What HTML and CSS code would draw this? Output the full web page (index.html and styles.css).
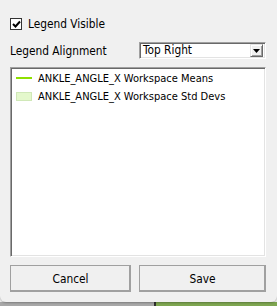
FILE: index.html
```html
<!DOCTYPE html>
<html lang="en">
<head>
    <meta charset="UTF-8">
    <title>Legend Settings</title>
    <link rel="stylesheet" href="styles.css">
</head>
<body>
    <div class="dialog">
        <label class="check-row">
            <span class="checkbox">
                <svg width="9" height="9" viewBox="0 0 9 9"><path d="M1 4 L3.5 6.5 L8 1.5" fill="none" stroke="#000" stroke-width="2"/></svg>
            </span>
            <span>Legend Visible</span>
        </label>

        <div class="align-row">
            <span class="label">Legend Alignment</span>
            <div class="select">
                <span class="select-text">Top Right</span>
                <span class="select-btn">
                    <svg width="7" height="4" viewBox="0 0 7 4"><path d="M0 0 H7 L3.5 4 Z" fill="#000"/></svg>
                </span>
            </div>
        </div>

        <div class="listbox">
            <div class="item">
                <span class="swatch-line"></span>
                <span class="item-text">ANKLE_ANGLE_X Workspace Means</span>
            </div>
            <div class="item">
                <span class="swatch-box"></span>
                <span class="item-text">ANKLE_ANGLE_X Workspace Std Devs</span>
            </div>
        </div>

        <div class="buttons">
            <button class="btn btn-cancel">Cancel</button>
            <button class="btn btn-save">Save</button>
        </div>
    </div>
    <div class="taskbar">
        <div class="tb-left"></div>
        <div class="tb-right"></div>
    </div>
</body>
</html>
```

FILE: styles.css
```css
* {
    margin: 0;
    padding: 0;
    box-sizing: border-box;
}

body {
    width: 277px;
    height: 306px;
    overflow: hidden;
    font-family: "DejaVu Sans Condensed", "DejaVu Sans", sans-serif;
    font-stretch: condensed;
    font-size: 11.8px;
    color: #000;
    background: #f0f0f0;
}

.dialog {
    height: 302px;
    background: #f0f0f0;
    border-radius: 0 0 6px 6px;
    box-shadow: 0 1px 2px rgba(0, 0, 0, 0.25);
    padding: 17px 11px 0 10px;
    display: flex;
    flex-direction: column;
    position: relative;
    z-index: 1;
}

.check-row {
    display: flex;
    align-items: center;
    gap: 6px;
    height: 12px;
    margin-top: 1px;
}

.checkbox {
    width: 12px;
    height: 12px;
    border: 1px solid #333;
    background: #fff;
    display: flex;
    align-items: center;
    justify-content: center;
}

.align-row {
    display: flex;
    align-items: center;
    margin-top: 12px;
    height: 17px;
}

.label {
    width: 129px;
}

.select {
    width: 127px;
    height: 17px;
    background: #fff;
    border-top: 1px solid #a0a0a0;
    border-left: 1px solid #a0a0a0;
    border-right: 1px solid #fff;
    border-bottom: 1px solid #fff;
    box-shadow: inset 1px 1px 0 #696969, inset -1px -1px 0 #e3e3e3;
    display: flex;
    align-items: center;
    padding: 0 2px 0 3px;
}

.select-text {
    flex: 1;
    line-height: 13px;
}

.select-btn {
    width: 13px;
    height: 13px;
    background: #f0f0f0;
    border-top: 1px solid #e3e3e3;
    border-left: 1px solid #e3e3e3;
    border-right: 1px solid #696969;
    border-bottom: 1px solid #696969;
    box-shadow: inset 1px 1px 0 #fff, inset -1px -1px 0 #a0a0a0;
    display: flex;
    align-items: center;
    justify-content: center;
}

.listbox {
    margin-top: 8px;
    height: 190px;
    background: #fff;
    border-top: 1px solid #a0a0a0;
    border-left: 1px solid #a0a0a0;
    border-right: 1px solid #fff;
    border-bottom: 1px solid #fff;
    box-shadow: inset 1px 1px 0 #696969, inset -1px -1px 0 #e3e3e3;
    padding: 1px 5px;
}

.item {
    display: flex;
    align-items: center;
    gap: 6px;
    height: 18px;
}

.item-text {
    white-space: nowrap;
    font-size: 11px;
}

.swatch-line {
    width: 16px;
    height: 2px;
    background: #8ee000;
}

.swatch-box {
    width: 16px;
    height: 9px;
    background: #e4f8cc;
    border: 1px solid #d0e8b8;
}

.buttons {
    display: flex;
    gap: 8px;
    margin-top: 8px;
}

.btn {
    height: 27px;
    font: inherit;
    color: #000;
    background: #f0f0f0;
    border-top: 1px solid #fff;
    border-left: 1px solid #fff;
    border-right: 1px solid #696969;
    border-bottom: 1px solid #696969;
    box-shadow: inset -1px -1px 0 #a0a0a0;
    outline: 1px solid #a0a0a0;
    outline-offset: -1px;
}

.btn-cancel {
    width: 121px;
}

.btn-save {
    width: 127px;
}

.taskbar {
    display: flex;
    height: 4px;
}

.tb-left {
    width: 156px;
    background: #a8a8a8;
    border-right: 2px solid #303030;
}

.tb-right {
    flex: 1;
    background: #7ea650;
}
```
